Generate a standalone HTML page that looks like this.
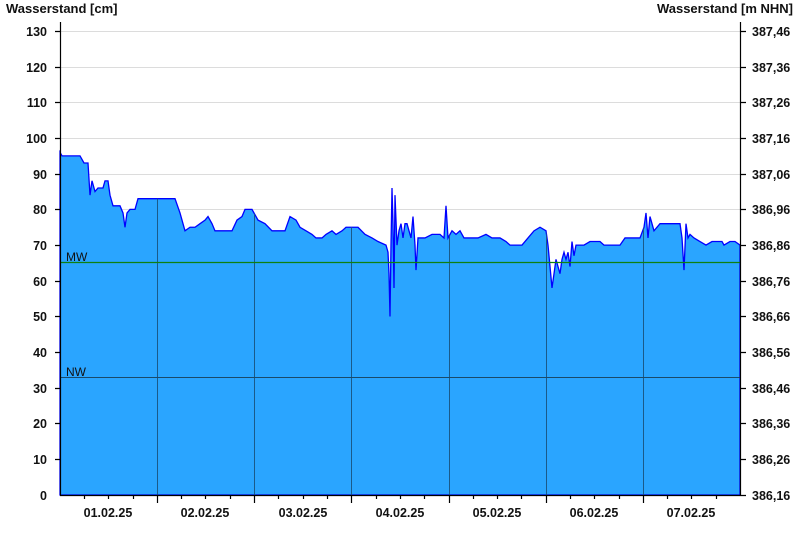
<!DOCTYPE html>
<html><head><meta charset="utf-8"><style>
html,body{margin:0;padding:0;background:#fff;}
svg{display:block;font-family:"Liberation Sans",Arial,sans-serif;}
.t{font-size:13px;font-weight:bold;fill:#111;}
.l{font-size:12.5px;font-weight:bold;fill:#111;}
</style></head><body>
<svg width="800" height="550" viewBox="0 0 800 550" xmlns="http://www.w3.org/2000/svg">
<defs>
<clipPath id="c"><polygon transform="translate(0,495) scale(1,-3.57)" points="60,0 60,96 62,95 80,95 84,93 88,93 90,84 92,88 95,85 98,86 103,86 105,88 108,88 110,84 113,81 120,81 123,79 125,75 127,79 130,80 135,80 138,83 145,83 175,83 180,79 185,74 190,75 195,75 200,76 205,77 208,78 212,76 215,74 232,74 237,77 242,78 245,80 252,80 258,77 265,76 272,74 285,74 290,78 296,77 300,75 306,74 312,73 316,72 322,72 326,73 332,74 336,73 342,74 346,75 358,75 365,73 372,72 378,71 386,70 388,68 389,62 390,50 391,70 392,86 393,76 394,58 395,84 397,70 399,74 401,76 403,72 405,76 407,76 409,74 411,72 413,78 415,70 416,63 418,72 425,72 432,73 440,73 444,72 446,81 448,72 452,74 456,73 460,74 464,72 478,72 486,73 492,72 500,72 506,71 510,70 522,70 528,72 534,74 540,75 546,74 548,70 550,64 552,58 554,62 556,66 558,64 560,62 562,66 564,68 566,66 568,68 570,64 572,71 574,67 576,70 584,70 590,71 600,71 604,70 620,70 625,72 640,72 644,75 646,79 648,72 650,78 652,76 654,74 660,76 668,76 680,76 682,72 684,63 686,76 688,72 690,73 694,72 700,71 706,70 712,71 722,71 724,70 730,71 735,71 740,70 740,0"/></clipPath>
</defs>
<text x="6" y="13" class="t">Wasserstand [cm]</text>
<text x="793" y="13" class="t" text-anchor="end">Wasserstand [m NHN]</text>
<g stroke="#dcdcdc" stroke-width="1">
<line x1="60" x2="740" y1="31.5" y2="31.5"/><line x1="60" x2="740" y1="67.5" y2="67.5"/><line x1="60" x2="740" y1="102.5" y2="102.5"/><line x1="60" x2="740" y1="138.5" y2="138.5"/><line x1="60" x2="740" y1="174.5" y2="174.5"/><line x1="60" x2="740" y1="209.5" y2="209.5"/>
</g>
<g transform="translate(0,495) scale(1,-3.57)">
<polygon fill="#2aa5ff" stroke="#0000ff" stroke-width="1.3" vector-effect="non-scaling-stroke" points="60,0 60,96 62,95 80,95 84,93 88,93 90,84 92,88 95,85 98,86 103,86 105,88 108,88 110,84 113,81 120,81 123,79 125,75 127,79 130,80 135,80 138,83 145,83 175,83 180,79 185,74 190,75 195,75 200,76 205,77 208,78 212,76 215,74 232,74 237,77 242,78 245,80 252,80 258,77 265,76 272,74 285,74 290,78 296,77 300,75 306,74 312,73 316,72 322,72 326,73 332,74 336,73 342,74 346,75 358,75 365,73 372,72 378,71 386,70 388,68 389,62 390,50 391,70 392,86 393,76 394,58 395,84 397,70 399,74 401,76 403,72 405,76 407,76 409,74 411,72 413,78 415,70 416,63 418,72 425,72 432,73 440,73 444,72 446,81 448,72 452,74 456,73 460,74 464,72 478,72 486,73 492,72 500,72 506,71 510,70 522,70 528,72 534,74 540,75 546,74 548,70 550,64 552,58 554,62 556,66 558,64 560,62 562,66 564,68 566,66 568,68 570,64 572,71 574,67 576,70 584,70 590,71 600,71 604,70 620,70 625,72 640,72 644,75 646,79 648,72 650,78 652,76 654,74 660,76 668,76 680,76 682,72 684,63 686,76 688,72 690,73 694,72 700,71 706,70 712,71 722,71 724,70 730,71 735,71 740,70 740,0"/>
</g>
<g stroke="#1a5a8a" stroke-width="1" clip-path="url(#c)">
<line x1="157.5" x2="157.5" y1="150" y2="495"/><line x1="254.5" x2="254.5" y1="150" y2="495"/><line x1="351.5" x2="351.5" y1="150" y2="495"/><line x1="449.5" x2="449.5" y1="150" y2="495"/><line x1="546.5" x2="546.5" y1="150" y2="495"/><line x1="643.5" x2="643.5" y1="150" y2="495"/>
</g>
<line x1="60" x2="740" y1="262.5" y2="262.5" stroke="#108010" stroke-width="1.3"/>
<line x1="60" x2="740" y1="377.5" y2="377.5" stroke="#1a4a6a" stroke-width="1"/>
<text x="66" y="261" font-size="12" fill="#111">MW</text>
<text x="66" y="376" font-size="12" fill="#111">NW</text>
<g stroke="#000" stroke-width="1.2" fill="none">
<line x1="60.5" y1="22" x2="60.5" y2="495"/>
<line x1="740.5" y1="22" x2="740.5" y2="495"/>
<line x1="60" y1="495.5" x2="741" y2="495.5"/>
<path d="M55,31.5h5M55,67.5h5M55,102.5h5M55,138.5h5M55,174.5h5M55,209.5h5M55,245.5h5M55,281.5h5M55,316.5h5M55,352.5h5M55,388.5h5M55,423.5h5M55,459.5h5"/>
<path d="M741,31.5h5M741,67.5h5M741,102.5h5M741,138.5h5M741,174.5h5M741,209.5h5M741,245.5h5M741,281.5h5M741,316.5h5M741,352.5h5M741,388.5h5M741,423.5h5M741,459.5h5M741,495.5h5"/>
<path d="M157.5,495v8M254.5,495v8M351.5,495v8M449.5,495v8M546.5,495v8M643.5,495v8"/>
<path d="M84.5,495v4M108.5,495v4M133.5,495v4M181.5,495v4M205.5,495v4M230.5,495v4M278.5,495v4M303.5,495v4M327.5,495v4M376.5,495v4M400.5,495v4M424.5,495v4M473.5,495v4M497.5,495v4M521.5,495v4M570.5,495v4M594.5,495v4M619.5,495v4M667.5,495v4M691.5,495v4M716.5,495v4"/>
</g>
<g class="l" text-anchor="end">
<text x="47" y="36">130</text><text x="47" y="72">120</text><text x="47" y="107">110</text><text x="47" y="143">100</text><text x="47" y="179">90</text><text x="47" y="214">80</text><text x="47" y="250">70</text><text x="47" y="286">60</text><text x="47" y="321">50</text><text x="47" y="357">40</text><text x="47" y="393">30</text><text x="47" y="428">20</text><text x="47" y="464">10</text><text x="47" y="500">0</text>
</g>
<g class="l">
<text x="752" y="36">387,46</text><text x="752" y="72">387,36</text><text x="752" y="107">387,26</text><text x="752" y="143">387,16</text><text x="752" y="179">387,06</text><text x="752" y="214">386,96</text><text x="752" y="250">386,86</text><text x="752" y="286">386,76</text><text x="752" y="321">386,66</text><text x="752" y="357">386,56</text><text x="752" y="393">386,46</text><text x="752" y="428">386,36</text><text x="752" y="464">386,26</text><text x="752" y="500">386,16</text>
</g>
<g class="l" text-anchor="middle">
<text x="108" y="517">01.02.25</text><text x="205" y="517">02.02.25</text><text x="303" y="517">03.02.25</text><text x="400" y="517">04.02.25</text><text x="497" y="517">05.02.25</text><text x="594" y="517">06.02.25</text><text x="691" y="517">07.02.25</text>
</g>
</svg>
</body></html>
